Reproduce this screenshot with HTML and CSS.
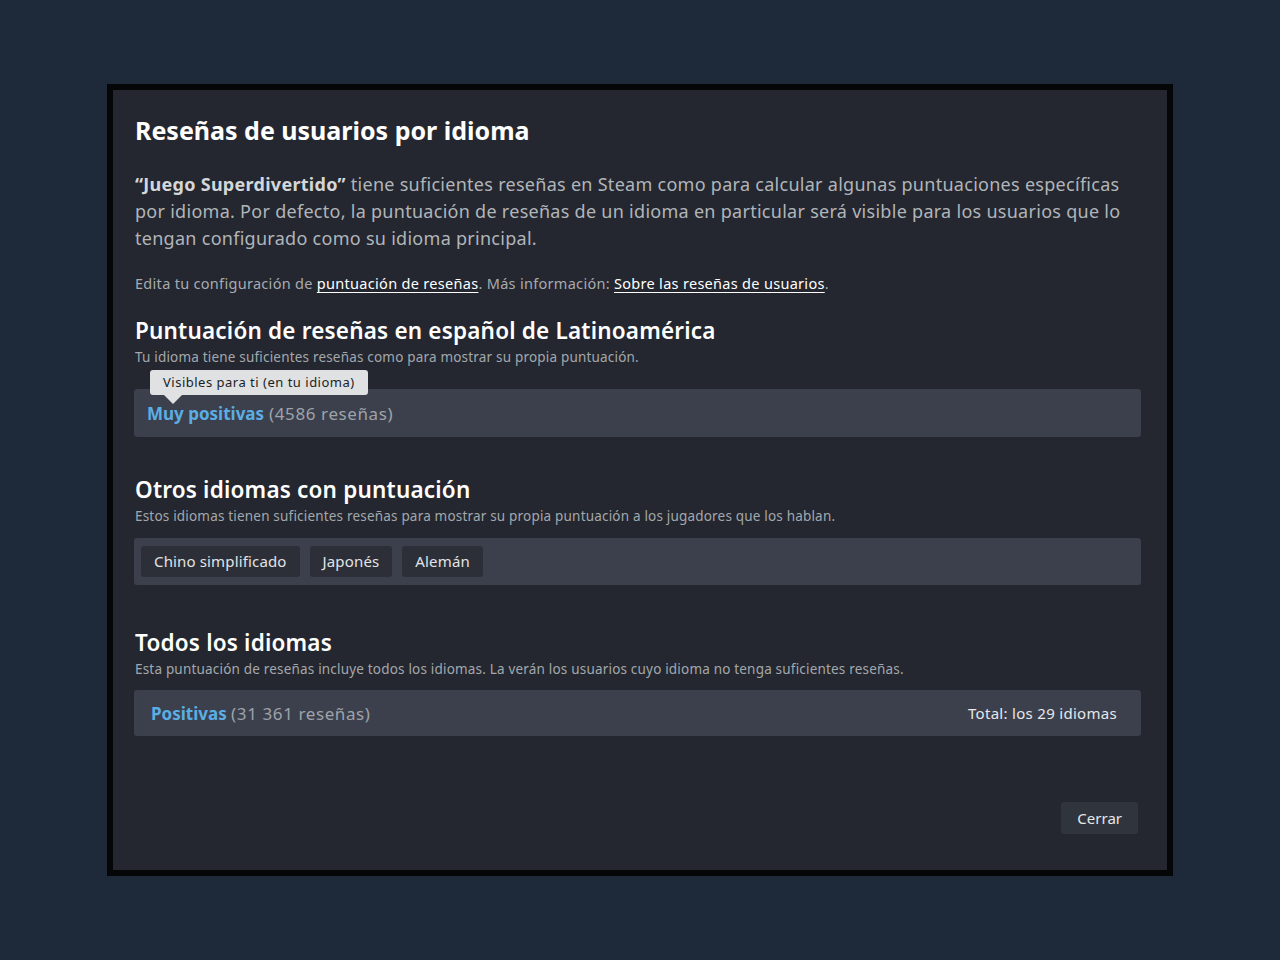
FILE: index.html
```html
<!DOCTYPE html>
<html lang="es">
	<head>
		<meta charset="UTF-8" />
		<meta name="viewport" content="width=device-width, initial-scale=1.0" />
		<title>Reseñas de usuarios por idioma</title>
		<link rel="stylesheet" href="styles.css">
	</head>
	<body>
		<div class="dialog">
			<div class="dialog-inner">
				<h1 class="dialog-title">Reseñas de usuarios por idioma</h1>

				<p class="intro">
					<b>“Juego Superdivertido”</b> tiene suficientes reseñas en Steam como para calcular algunas puntuaciones específicas por idioma. Por defecto, la puntuación de reseñas de un idioma en particular será visible para los usuarios que lo tengan configurado como su idioma principal.
				</p>

				<p class="settings">
					Edita tu configuración de <a href="#">puntuación de reseñas</a>. Más información: <a href="#">Sobre las reseñas de usuarios</a>.
				</p>

				<div class="section section-own">
					<h2 class="section-title">Puntuación de reseñas en español de Latinoamérica</h2>
					<div class="section-desc">Tu idioma tiene suficientes reseñas como para mostrar su propia puntuación.</div>
					<div class="score-row score-row-own">
						<div class="tooltip">Visibles para ti (en tu idioma)</div>
						<span class="score">Muy positivas</span> <span class="count">(4586 reseñas)</span>
					</div>
				</div>

				<div class="section section-other">
					<h2 class="section-title">Otros idiomas con puntuación</h2>
					<div class="section-desc">Estos idiomas tienen suficientes reseñas para mostrar su propia puntuación a los jugadores que los hablan.</div>
					<div class="lang-row">
						<span class="lang-chip">Chino simplificado</span>
						<span class="lang-chip">Japonés</span>
						<span class="lang-chip">Alemán</span>
					</div>
				</div>

				<div class="section section-all">
					<h2 class="section-title">Todos los idiomas</h2>
					<div class="section-desc">Esta puntuación de reseñas incluye todos los idiomas. La verán los usuarios cuyo idioma no tenga suficientes reseñas.</div>
					<div class="score-row score-row-all">
						<div>
							<span class="score">Positivas</span> <span class="count">(31 361 reseñas)</span>
						</div>
						<span class="total">Total: los 29 idiomas</span>
					</div>
				</div>

				<div class="footer">
					<button class="btn-close">Cerrar</button>
				</div>
			</div>
		</div>
	</body>
</html>
```

FILE: styles.css
```css
* {
	margin: 0;
	padding: 0;
	box-sizing: border-box;
}

body {
	background: #1e2a3a;
	font-family: 'Noto Sans', 'Open Sans', sans-serif;
	min-height: 100vh;
	padding: 84px 0 0 107px;
}

.dialog {
	width: 1066px;
	height: 792px;
	border: 6px solid #050607;
	background: #24272f;
}

.dialog-inner {
	height: 100%;
	padding: 23px 26px 0 21px;
	display: flex;
	flex-direction: column;
}

.dialog-title {
	font-size: 25px;
	font-weight: 700;
	color: #ffffff;
	line-height: 34px;
	margin-left: 1px;
}

.intro {
	margin-top: 24px;
	font-size: 18px;
	line-height: 27px;
	letter-spacing: 0.28px;
	color: #b1b5ba;
	margin-left: 1px;
}

.intro b {
	color: #d4d7da;
	font-weight: 700;
}

.settings {
	margin-top: 21px;
	font-size: 14.5px;
	line-height: 20px;
	letter-spacing: 0.3px;
	color: #a7abb0;
	margin-left: 1px;
}

.settings a {
	color: #ffffff;
	text-decoration: underline;
	text-underline-offset: 3px;
}

.section {
	position: relative;
}

.section-own {
	margin-top: 23px;
}

.section-other {
	margin-top: 38px;
}

.section-all {
	margin-top: 43px;
}

.section-title {
	font-size: 22.5px;
	font-weight: 600;
	color: #ffffff;
	line-height: 30px;
	letter-spacing: 0.19px;
	margin-left: 1px;
}

.section-desc {
	margin-top: 2px;
	font-size: 13.5px;
	line-height: 18px;
	letter-spacing: 0.19px;
	color: #a3a7ad;
	margin-left: 1px;
}

.score-row {
	background: #3c404d;
	border-radius: 3px;
	height: 48px;
	display: flex;
	align-items: center;
	font-size: 17px;
	position: relative;
}

.score-row-own {
	margin-top: 23px;
	padding-left: 13px;
	gap: 5px;
}

.score-row-all {
	margin-top: 12px;
	height: 46px;
	padding: 0 24px 0 17px;
	justify-content: space-between;
}

.score {
	color: #5aaee4;
	font-weight: 700;
}

.count {
	color: #9ea3a9;
	letter-spacing: 0.6px;
}

.total {
	font-size: 15px;
	letter-spacing: 0.3px;
	color: #e6e8ea;
}

.tooltip {
	position: absolute;
	left: 16px;
	top: -19px;
	background: #dfe1e3;
	color: #1c1e22;
	font-size: 13px;
	line-height: 25px;
	padding: 0 13px;
	border-radius: 3px;
	letter-spacing: 0.5px;
}

.tooltip:after {
	content: '';
	position: absolute;
	left: 14px;
	bottom: -9px;
	border-left: 9px solid transparent;
	border-right: 9px solid transparent;
	border-top: 9px solid #dfe1e3;
}

.lang-row {
	background: #3c404d;
	border-radius: 3px;
	margin-top: 13px;
	height: 47px;
	display: flex;
	align-items: center;
	gap: 10px;
	padding-left: 7px;
}

.lang-chip {
	background: #2c2f38;
	color: #e2e4e6;
	font-size: 15px;
	line-height: 31px;
	letter-spacing: 0.15px;
	padding: 0 13px;
	border-radius: 3px;
}

.footer {
	margin-top: auto;
	margin-bottom: 36px;
	display: flex;
	justify-content: flex-end;
	padding-right: 3px;
}

.btn-close {
	background: #30343d;
	color: #e6e8ea;
	border: none;
	border-radius: 3px;
	font-family: inherit;
	font-size: 15px;
	height: 32px;
	padding: 0 16px;
}
```
